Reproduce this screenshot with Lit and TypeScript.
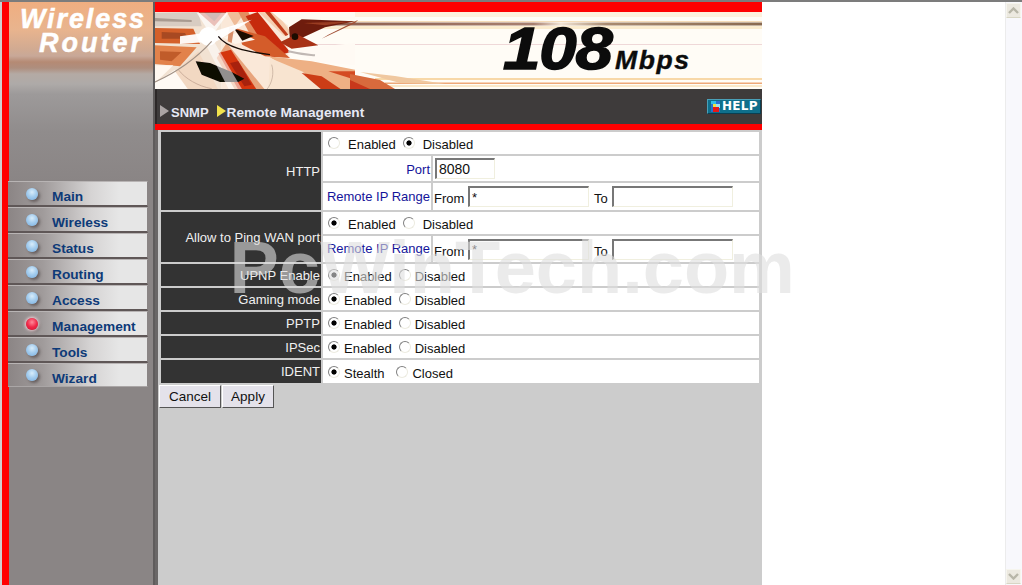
import { LitElement, html, css } from "lit";
import { customElement } from "lit/decorators.js";

const NAV = ["Main", "Wireless", "Status", "Routing", "Access", "Management", "Tools", "Wizard"];
const ACTIVE = "Management";

@customElement("app-root")
export class AppRoot extends LitElement {
  static styles = css`
    :host { display: flex; flex-direction: column; width: 1022px; height: 585px; overflow: hidden; position: relative; background: #fff; font-family: "Liberation Sans", Arial, sans-serif; font-size: 13px; color: #111; }
    * { box-sizing: border-box; }
    .topline { height: 2px; background: #7c7c7c; flex: none; }
    .frames { flex: 1; display: flex; min-height: 0; }
    .edge { width: 2px; background: #d0d0d0; }
    .red { width: 7px; background: #ff0000; }
    .left { width: 144px; background: #8a8585; display: flex; flex-direction: column; }
    .logo { height: 179px; padding: 5px 7px 0 0; text-align: right; color: #fff; font: italic bold 27px/24px "Liberation Sans", Arial, sans-serif; letter-spacing: 1.9px; -webkit-text-stroke: .5px #fff;
      background: linear-gradient(180deg, #f0ae80 0, #e8b48e 28px, #d0aa92 48px, #c8a898 54px, #b58a74 60px, #ae8e7e 66px, #b4aaa4 72px, #aeaaa8 82px, #9d9a9a 92px, #908c8c 130px, #8a8585 179px); }
    .logo .r2 { letter-spacing: 3px; padding-right: 2px; }
    .nav { display: flex; flex-direction: column; margin-left: -1px; width: 140px; }
    .item { height: 26px; display: flex; align-items: center; padding: 6px 0 0 17.5px; gap: 14.5px; border-top: 1px solid #b8b4b4; border-bottom: 2px solid #5f5757; border-right: 1px solid #8a8585;
      background: linear-gradient(90deg, #8b8585 0, #a09b9b 25%, #d6d4d4 60%, #e6e6e6 80%); color: #0d3a78; font-weight: bold; font-size: 13.7px; }
    .item:last-child { border-bottom: 1px solid #aaa6a6; height: 24px; }
    .orb { width: 12px; height: 12px; border-radius: 50%; margin-top: -6px; background: radial-gradient(circle at 50% 35%, #d8ecfa 0, #a5cdee 45%, #78aee0 100%); box-shadow: 2px 2px 3px rgba(60,50,50,.55); flex: none; }
    .orb.on { background: radial-gradient(circle at 50% 35%, #ff8a9a 0, #f02848 50%, #d01030 100%); box-shadow: 0 0 3px 1px #f3d4da, 2px 2px 3px rgba(60,50,50,.4); }
    .divider { width: 2px; background: #5f5c5c; }
    .main { width: 607px; display: flex; flex-direction: column; background: #ccc; }
    .redbar { height: 10px; background: #ff0000; flex: none; }
    .banner { height: 77px; position: relative; flex: none; overflow: hidden; background: #fffaf2; }
    .banner svg { display: block; }
    .speed { position: absolute; left: 348px; top: 6px; display: flex; align-items: flex-end; color: #0c0c0c; font-style: italic; font-weight: bold; }
    .n108 { font-size: 60px; line-height: 62px; letter-spacing: -1px; display: inline-block; transform: scaleX(1.12); transform-origin: 0 0; width: 112px; -webkit-text-stroke: 1.5px #0c0c0c; }
    .mbps { font-size: 26.5px; line-height: 30px; letter-spacing: 1.6px; margin-bottom: 5px; -webkit-text-stroke: .4px #0c0c0c; }
    .crumb { height: 35px; flex: none; background: #3e3b3b; display: flex; padding: 15px 1px 0 3px; color: #e6e8f4; font-weight: bold; font-size: 13.7px; border-left: 2px solid #2c2828; }
    .tri { width: 0; height: 0; border-left: 9px solid #aaa4a4; border-top: 6px solid transparent; border-bottom: 6px solid transparent; margin-top: 1px; flex: none; }
    .tri.y { border-left-color: #f2e24c; margin-left: 8px; }
    .crumb span { margin-left: 2px; line-height: 16px; padding-top: 1px; }
    .crumb span.snmp { font-size: 13px; }
    .crumb span.rm { margin-left: 1px; }
    .crumb .sp { flex: 1; }
    .help { width: 54px; height: 15px; margin-top: -5px; background: #0f6f8c; border: 1px solid; border-color: #4aa0b8 #0a3f52 #0a3f52 #4aa0b8; display: flex; align-items: center; gap: 2px; padding-left: 3px; color: #fff; font: bold 12px/13px "DejaVu Sans", sans-serif; letter-spacing: .3px; }
    .help svg { flex: none; }
    .redbar2 { height: 6px; background: #ff0000; flex: none; }
    .content { flex: 1; padding: 2px 0 0 3px; border-left: 3px solid; border-image: linear-gradient(90deg, #6a6767 0 66%, #f4f4f4 66% 100%) 1; display: flex; flex-direction: column; }
    .grid { display: grid; grid-template-columns: 160px 108px 326px; grid-template-rows: 22px 25px 27px 22px 26px 22px 22px 22px 22px 23px; gap: 2px; }
    .lab { background: #333; color: #f0f0f0; display: flex; align-items: center; justify-content: flex-end; padding: 0 1px 0 0; font-size: 13px; }
    .sub { background: #fff; color: #14149a; display: flex; align-items: center; justify-content: flex-end; padding: 0 1px 1px 0; }
    .sub.low { padding: 1px 1px 0 0; }
    .val { background: #fff; display: flex; align-items: center; padding-left: 2px; }
    .wide { grid-column: 2 / 4; background: #fff; display: flex; align-items: center; padding: 2px 0 0 5px; }
    .s3 { grid-row: span 3; }
    .s2 { grid-row: span 2; }
    label { display: inline-flex; align-items: center; gap: 4px; margin-right: 7px; }
    .roomy label { gap: 8px; }
    .wider { padding-top: 3px; }
    .wider label { margin-right: 12px; }
    input[type="radio"] { appearance: none; margin: -2px 0 0; width: 12px; height: 12px; border-radius: 50%; border: 1px solid; border-color: #808080 #ecebe0 #ecebe0 #808080; background: #fff; flex: none; }
    input[type="radio"]:checked { background: radial-gradient(circle, #000 0 2.2px, #fff 3px); }
    input[type="text"] { font: 13px "Liberation Sans", Arial, sans-serif; color: #111; height: 21px; width: 121px; padding: 0 2px; margin: 0; background: #fff; border-style: solid; border-width: 2px 1px 1px 2px; border-color: #777 #f0efdf #f0efdf #777; outline: none; }
    input.port { width: 60px; font-size: 14px; }
    .from { margin: 4px 4px 0 -1px; display: inline-block; width: 30px; }
    .to { margin: 4px 4px 0 5px; }
    .btns { display: flex; gap: 1px; margin: 2px 0 0 -2px; }
    button { height: 23px; padding: 0; font: 13.5px "Liberation Sans", Arial, sans-serif; color: #111; background: #e4e2ea; border: 1px solid; border-color: #fff #555 #555 #fff; }
    .cancel { width: 62px; }
    .apply { width: 52px; }
    .fill { flex: 1; background: #fff; }
    .scroll { width: 17px; background: #f8f8fc; border-left: 1px solid #ececec; display: flex; flex-direction: column; justify-content: space-between; padding: 1px 1px 1px 0; }
    .arrow { height: 15px; background: #ece9e0; border: 1px solid #f6f5ee; border-bottom-color: #d8d6c4; display: flex; align-items: center; justify-content: center; }
    .mark { position: absolute; left: 229.5px; top: 227px; font: bold 74px/82px "Liberation Sans", Arial, sans-serif; color: rgba(222,222,222,.6); pointer-events: none; white-space: nowrap; }
  `;

  private radios(name: string, first: string, second: string, checked: number, cls = "") {
    return html`<div class="wide ${cls}">
      <label><input type="radio" name=${name} ?checked=${checked === 0} />${first}</label>
      <label><input type="radio" name=${name} ?checked=${checked === 1} />${second}</label>
    </div>`;
  }

  private range() {
    return html`<div class="sub">Remote IP Range</div>
      <div class="val"><span class="from">From</span><input type="text" value="*" /><span class="to">To</span><input type="text" /></div>`;
  }

  private art() {
    return html`<svg width="607" height="77" viewBox="0 0 607 77">
      <defs><filter id="b" x="-5%" y="-5%" width="110%" height="110%"><feGaussianBlur stdDeviation="0.6" /></filter>
      <linearGradient id="l" x1="0" x2="1"><stop offset="0" stop-color="#8a5a48"/><stop offset=".5" stop-color="#a88070"/><stop offset=".56" stop-color="#f2e4d4"/><stop offset=".66" stop-color="#a88a70"/><stop offset="1" stop-color="#8a6a50"/></linearGradient></defs>
      <rect width="607" height="77" fill="#fffcf6" />
      <rect x="130" y="0" width="477" height="5" fill="#fdf0dc" />
      <rect x="150" y="9" width="457" height="1" fill="#f5dcb8" />
      <rect x="150" y="10.5" width="457" height="3" fill="url(#l)" />
      <rect x="150" y="14" width="457" height="3" fill="#fbeccf" />
      <rect x="130" y="32" width="477" height="1" fill="#efd8d8" />
      <rect x="220" y="66" width="387" height="2" fill="#f8d8a8" />
      <rect x="230" y="70.5" width="377" height="1.5" fill="#eea878" />
      <rect x="230" y="73" width="377" height="2" fill="#fbe8c8" />
      <g filter="url(#b)"><g transform="scale(.3333) translate(0,-12)">
        <rect x="0" y="12" width="200" height="240" fill="#f2e2d2" />
        <rect x="200" y="12" width="200" height="240" fill="#fae8d8" />
        <polygon points="0,15 130,12 140,55 0,55" fill="#d8ccc2" />
        <polygon points="0,30 110,36 110,42 0,40" fill="#a89a90" />
        <polygon points="0,60 115,62 135,108 0,105" fill="#d4602a" />
        <polygon points="20,72 90,75 100,92 20,92" fill="#a84a22" />
        <polygon points="0,112 125,118 75,175 0,168" fill="#e2824c" />
        <polygon points="15,130 80,132 50,160 15,155" fill="#c05c2c" />
        <polygon points="0,172 55,172 0,225" fill="#fff8f0" />
        <polygon points="0,225 60,185 150,245 0,252" fill="#fffaf4" />
        <polygon points="60,190 130,130 190,245 100,245" fill="#f2d8c2" />
        <polygon points="185,150 215,105 330,245 240,245" fill="#e8a47c" />
        <polygon points="190,135 228,125 305,245 250,245" fill="#d43410" />
        <polygon points="225,165 250,160 290,230 268,235" fill="#a82208" />
        <polygon points="130,12 215,12 178,55" fill="#b82c14" />
        <polygon points="148,14 200,14 178,40" fill="#6a1408" />
        <polygon points="215,12 270,12 240,55" fill="#f0bc98" />
        <polygon points="250,12 280,12 340,130 310,128" fill="#e48c60" />
        <polygon points="272,25 308,12 405,132 352,150" fill="#c62c10" />
        <polygon points="310,12 362,12 410,75 388,85" fill="#f6ceb0" />
        <polygon points="330,12 345,12 400,80 392,84" fill="#c03c1c" />
        <polygon points="240,60 330,85 405,150 330,145 262,110" fill="#d45c2c" />
        <polygon points="350,12 600,12 600,35 440,35 405,58" fill="#fffaf2" />
        <polygon points="402,58 440,34 600,40 510,58 445,88 405,98" fill="#6e1c0c" />
        <polygon points="445,45 600,40 510,52" fill="#9a3e22" />
        <polygon points="375,103 425,78 490,112 410,122" fill="#a83016" />
        <circle cx="420" cy="86" r="10" fill="#1e0804" />
        <polygon points="430,122 600,105 600,172 470,160" fill="#fffaf4" />
        <polygon points="340,145 470,160 600,185 600,245 500,245" fill="#eeb084" />
        <polygon points="345,150 440,190 520,245 340,245" fill="#f8e4d0" />
        <polygon points="440,195 500,205 560,245 500,245" fill="#cc3c18" />
        <polygon points="520,190 600,190 600,215" fill="#d44c24" />
        <polygon points="122,160 165,165 230,192 268,212 250,222 195,222 140,200" fill="#0e0806" />
        <polygon points="205,88 255,72 300,95 240,108" fill="#fdf4ea" />
        <polygon points="238,62 296,84 262,98" fill="#1e0804" />
        <polygon points="222,58 238,56 230,105 218,100" fill="#d88e68" />
        <polygon points="75,85 170,72 290,35 185,100 75,108" fill="#fff" opacity=".95" />
        <polygon points="125,14 170,85 220,14" fill="#fff" opacity=".7" />
        <polygon points="172,92 262,245 222,245 150,105" fill="#fff" opacity=".55" />
        <circle cx="160" cy="85" r="28" fill="#fff" />
        <path d="M190 85 C215 118 270 130 345 140" stroke="#140806" stroke-width="4" fill="none" />
        <path d="M170 100 C125 150 70 190 0 222" stroke="#a09084" stroke-width="3.5" fill="none" />
        <path d="M70 185 C90 212 130 235 170 242" stroke="#b89888" stroke-width="2" fill="none" />
        <path d="M350 170 C358 195 352 225 335 245" stroke="#a89080" stroke-width="1.5" fill="none" />
        <path d="M400 130 C440 140 460 140 480 142" stroke="#c0b8b4" stroke-width="6" fill="none" />
        <polygon points="600,45 610,35 520,80 500,92" fill="#a04e34" />
      </g>
      <polygon points="195,77 195,62 225,68 240,77" fill="#d86a3c" />
      <polygon points="195,77 195,68 215,77" fill="#c8381a" />
      <polygon points="205,60 240,64 290,72 245,71" fill="#f0c8a0" />
      </g>
    </svg>`;
  }

  render() {
    return html`
      <div class="topline"></div>
      <div class="frames">
        <div class="edge"></div>
        <div class="red"></div>
        <div class="left">
          <div class="logo"><div>Wireless</div><div class="r2">Router</div></div>
          <div class="nav">
            ${NAV.map((n) => html`<div class="item"><i class="orb ${n === ACTIVE ? "on" : ""}"></i>${n}</div>`)}
          </div>
        </div>
        <div class="divider"></div>
        <div class="main">
          <div class="redbar"></div>
          <div class="banner">
            ${this.art()}
            <div class="speed"><span class="n108">108</span><span class="mbps">Mbps</span></div>
          </div>
          <div class="crumb">
            <i class="tri"></i><span class="snmp">SNMP</span>
            <i class="tri y"></i><span class="rm">Remote Management</span>
            <i class="sp"></i>
            <div class="help">
              <svg width="9" height="11" viewBox="0 0 9 11"><rect width="9" height="11" fill="#2a6fd0"/><rect x="0" y="0" width="5" height="3" fill="#30c0e8"/><rect x="5" y="3" width="4" height="4" fill="#9ce0f0"/><rect x="2" y="3" width="3" height="3" fill="#f0e040"/><rect x="2" y="6" width="6" height="5" fill="#e81818"/></svg>
              HELP
            </div>
          </div>
          <div class="redbar2"></div>
          <div class="content">
            <div class="grid">
              <div class="lab s3">HTTP</div>
              ${this.radios("http", "Enabled", "Disabled", 1, "roomy")}
              <div class="sub low">Port</div>
              <div class="val"><input class="port" type="text" value="8080" /></div>
              ${this.range()}
              <div class="lab s2">Allow to Ping WAN port</div>
              ${this.radios("ping", "Enabled", "Disabled", 0, "roomy")}
              ${this.range()}
              <div class="lab">UPNP Enable</div>
              ${this.radios("upnp", "Enabled", "Disabled", 0)}
              <div class="lab">Gaming mode</div>
              ${this.radios("game", "Enabled", "Disabled", 0)}
              <div class="lab">PPTP</div>
              ${this.radios("pptp", "Enabled", "Disabled", 0)}
              <div class="lab">IPSec</div>
              ${this.radios("ipsec", "Enabled", "Disabled", 0)}
              <div class="lab">IDENT</div>
              ${this.radios("ident", "Stealth", "Closed", 0, "wider")}
            </div>
            <div class="btns"><button class="cancel">Cancel</button><button class="apply">Apply</button></div>
          </div>
        </div>
        <div class="fill"></div>
        <div class="scroll">
          <div class="arrow"><svg width="11" height="7" viewBox="0 0 11 7"><path d="M1 6 L5.5 1.5 L10 6" fill="none" stroke="#b8b6a8" stroke-width="2.4"/></svg></div>
          <div class="arrow"><svg width="11" height="7" viewBox="0 0 11 7"><path d="M1 1 L5.5 5.5 L10 1" fill="none" stroke="#b8b6a8" stroke-width="2.4"/></svg></div>
        </div>
      </div>
      <div class="mark">PcWinTech.com</div>
    `;
  }
}
